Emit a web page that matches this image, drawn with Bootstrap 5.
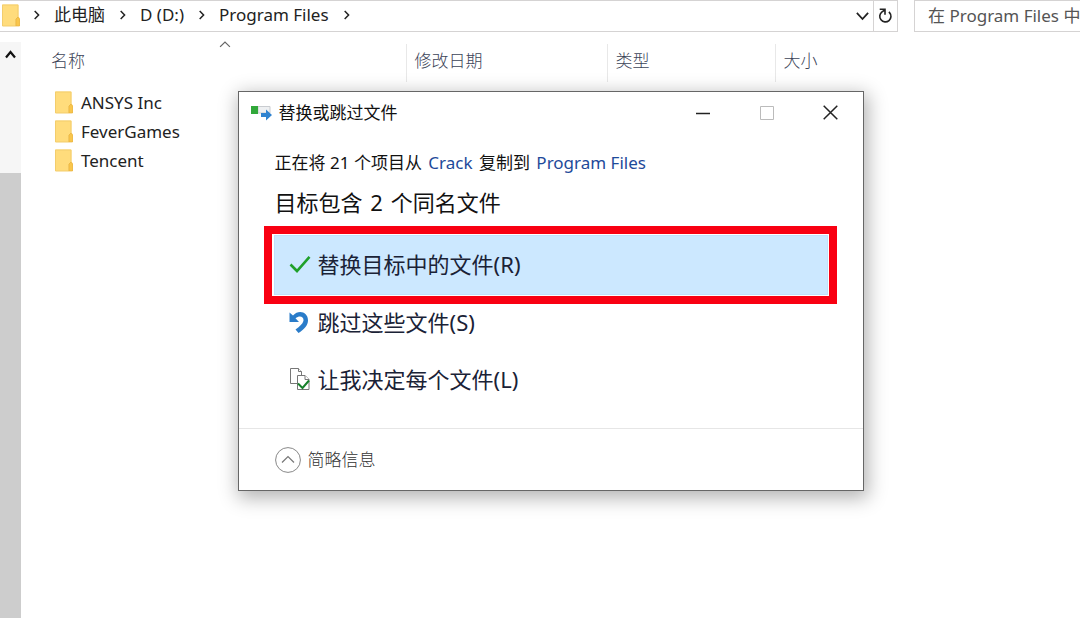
<!DOCTYPE html>
<html lang="zh-CN">
<head>
<meta charset="utf-8">
<meta name="viewport" content="width=device-width, initial-scale=1">
<title>Program Files</title>
<link href="https://cdn.jsdelivr.net/npm/bootstrap@5.3.0/dist/css/bootstrap.min.css" rel="stylesheet">
<style>
  body { font-family: "Noto Sans", "Noto Sans CJK SC", sans-serif; font-size: 17px; line-height: 24px; color: #222; background: #fff; overflow: hidden; }
  button { background: none; border: 0; padding: 0; color: inherit; }
  svg { display: block; flex: none; }
  .stroke { fill: none; stroke: currentColor; stroke-linecap: square; }

  .address { border: 1px solid #d5d3d3; border-left: 0; }
  .topbar { height: 32px; }
  .crumb { color: #222; text-decoration: none; padding-right: 1px; }
  .crumbs { gap: 14px; padding: 0 0 2px 2px; }
  .refresh { width: 24px; border-left: 1px solid #d5d3d3; }
  .search { width: 166px; border: 1px solid #d5d3d3; border-right: 0; color: #555; padding: 0 0 0 13px; outline: 0; }
  .search::placeholder { color: #555; opacity: 1; }

  .scroller { width: 21px; background: #f6f6f6; margin-top: 10px; }
  .scroll-up { height: 24px; }
  .thumb { background: #cdcdcd; margin-top: 107px; }

  .files { table-layout: fixed; }
  .files th { font-weight: 300; color: #3c4458; height: 38px; padding: 0 8px 4px; border-left: 1px solid #e8e8e8; }
  .files th:first-child { border-left: 0; padding-left: 30px; }
  .files td { height: 29px; padding: 0 0 0 34px; }
  .files tbody::before { content: ""; display: block; height: 6px; }
  .col-name { width: 385px; } .col-date { width: 201px; } .col-type { width: 168px; }
  .sort { left: 198px; top: 0; color: #666; }

  .copy-dialog { left: 22%; top: 91px; width: 58%; background: #fff; border: 1px solid #666; box-shadow: 2px 5px 18px 2px rgba(0,0,0,.3); color: #111; }
  .titlebar { height: 41px; padding-left: 12px; }
  .title-text { padding-left: 7px; }
  .winbtn { width: 64px; height: 41px; }
  .intro { padding: 18px 36px 0; }
  .intro a { color: #1e4a9a; text-decoration: none; padding: 0 2px; }
  .heading { font-size: 22px; line-height: 32px; font-weight: 400; margin: 11px 0 0; }
  .count { padding: 0 2px; }
  .marked { border: 8px solid #f90012; margin: 8px 26px 0 25px; padding: 1px 1px 1px 2px; }
  .option { font-size: 22px; line-height: 32px; height: 57px; gap: 7px; padding: 0 0 2px 15px; color: #1a2236; text-align: left; }
  .option.chosen { background: #cce8ff; height: 60px; border: 1px solid #c0e0fa; padding-left: 14px; }
  .others { padding: 0 35px 20px; margin-top: -10px; }
  .foot { border-top: 1px solid #e6e6e6; padding: 15px 36px; }
  .less { gap: 7px; color: #333; font-weight: 300; line-height: 31px; }
</style>
</head>
<body class="vh-100 d-flex flex-column position-relative">

<svg class="d-none" aria-hidden="true">
  <symbol id="folder" viewBox="0 0 18 23">
    <path d="M0 .5h16.500v12l1.500 2V22H0z" fill="#ffe08a"/>
    <path d="M.5 1h15.500v12l-2 2v7H.5z" fill="#ffdc7c" stroke="#f3cd6c"/>
    <path d="M14 22v-7l2-2 1.500 2v7z" fill="#f9c64c" stroke="#e9b23e" stroke-width=".7"/>
  </symbol>
  <symbol id="next" viewBox="0 0 6 10"><path class="stroke" d="M1.200 1.500 4.600 5 1.200 8.500" stroke-width="1.500"/></symbol>
</svg>

<header class="topbar d-flex flex-shrink-0">
  <nav class="address d-flex align-items-center flex-grow-1" aria-label="地址">
    <div class="crumbs d-flex align-items-center flex-grow-1">
      <svg width="18" height="23"><use href="#folder"/></svg>
      <svg width="6" height="10"><use href="#next"/></svg>
      <a class="crumb" href="#">此电脑</a>
      <svg width="6" height="10"><use href="#next"/></svg>
      <a class="crumb" href="#">D (D:)</a>
      <svg width="6" height="10"><use href="#next"/></svg>
      <a class="crumb" href="#">Program Files</a>
      <svg width="6" height="10"><use href="#next"/></svg>
    </div>
    <button class="px-1" aria-label="展开"><svg width="13" height="9" viewBox="0 0 13 9"><path class="stroke" stroke-width="1.800" d="m1.500 1.500 5 5.500 5-5.500"/></svg></button>
    <button class="refresh align-self-stretch d-flex align-items-center justify-content-center" aria-label="刷新"><svg width="15" height="16" viewBox="0 0 15 16"><path class="stroke" stroke-width="1.600" d="M11.500 4.500A5.600 5.600 0 1 1 4 3.800L6.800 2M2.500 1.200H7V6"/></svg></button>
  </nav>
  <input class="search ms-3 rounded-0" type="text" aria-label="搜索" placeholder="在 Program Files 中">
</header>

<main class="d-flex flex-grow-1">
  <div class="scroller d-flex flex-column flex-shrink-0">
    <button class="scroll-up d-flex justify-content-center align-items-center" aria-label="向上"><svg width="11" height="9" viewBox="0 0 11 9"><path d="M1 7.500 5.500 2 10 7.500" fill="none" stroke="#111" stroke-width="2.200"/></svg></button>
    <div class="thumb flex-grow-1"></div>
  </div>
  <div class="flex-grow-1 position-relative pt-2">
    <svg class="sort position-absolute mt-2" width="12" height="8" viewBox="0 0 12 8"><path class="stroke" stroke-width="1.200" d="M1.500 6.500 6 2l4.500 4.500"/></svg>
    <table class="files w-100 mt-1">
      <thead><tr><th class="col-name">名称</th><th class="col-date">修改日期</th><th class="col-type">类型</th><th>大小</th></tr></thead>
      <tbody>
        <tr><td><div class="d-flex align-items-center gap-2"><svg width="18" height="23"><use href="#folder"/></svg><span>ANSYS Inc</span></div></td><td></td><td></td><td></td></tr>
        <tr><td><div class="d-flex align-items-center gap-2"><svg width="18" height="23"><use href="#folder"/></svg><span>FeverGames</span></div></td><td></td><td></td><td></td></tr>
        <tr><td><div class="d-flex align-items-center gap-2"><svg width="18" height="23"><use href="#folder"/></svg><span>Tencent</span></div></td><td></td><td></td><td></td></tr>
      </tbody>
    </table>
  </div>
</main>

<section class="copy-dialog position-absolute" role="dialog" aria-labelledby="dlg-title">
  <div class="titlebar d-flex align-items-center">
    <svg width="21" height="16" viewBox="0 0 21 16"><path d="M7 1.500h12V8H7z" fill="#eef0f2" stroke="#c9ccd0"/><path d="M0 1h7v8H0z" fill="#31a83a"/><path d="M10 8h5V4.500l6 5.500-6 5.500V12h-5z" fill="#2f83d0"/></svg>
    <span id="dlg-title" class="title-text flex-grow-1">替换或跳过文件</span>
    <button class="winbtn d-flex align-items-center justify-content-center" aria-label="最小化"><svg width="14" height="14" viewBox="0 0 14 14"><path d="M0 7.500h14" stroke="#222" stroke-width="1.500"/></svg></button>
    <button class="winbtn d-flex align-items-center justify-content-center" aria-label="最大化" disabled><svg width="14" height="14" viewBox="0 0 14 14"><path d="M.5.5h13v13H.5z" fill="none" stroke="#bbb"/></svg></button>
    <button class="winbtn d-flex align-items-center justify-content-center" aria-label="关闭"><svg width="15" height="15" viewBox="0 0 15 15"><path d="m.7.7 13.600 13.600m0-13.600L.7 14.300" stroke="#222" stroke-width="1.500"/></svg></button>
  </div>
  <div class="intro">
    <div>正在将 21 个项目从 <a href="#">Crack</a> 复制到 <a href="#">Program Files</a></div>
    <h1 class="heading">目标包含 <span class="count">2</span> 个同名文件</h1>
  </div>
  <div class="marked">
    <button class="option chosen d-flex align-items-center w-100">
      <svg width="22" height="18" viewBox="0 0 22 18"><path d="m1.500 9.500 6.500 6.500L20.500 1.800" fill="none" stroke="#1fa02a" stroke-width="2.600"/></svg>替换目标中的文件(R)</button>
  </div>
  <div class="others">
    <button class="option d-flex align-items-center w-100">
      <svg width="22" height="22" viewBox="0 0 22 22"><path d="M.5 1.500v9.500h9.500L6.500 7.300C11 3.800 15.500 6 14.300 10.200 13.600 12.800 11 15 6.500 18.500L9.500 22C15 18.500 19 14.500 19 9.500 19 1 9.800-1.800 4 4.500z" fill="#2a7cc9"/></svg>跳过这些文件(S)</button>
    <button class="option d-flex align-items-center w-100">
      <svg width="22" height="24" viewBox="0 0 22 24"><g fill="#fff" stroke="#777"><path d="M1.500 1.500h8l3 3v12h-11z"/><path d="M9.500 1.500v3h3"/><path d="M8.500 8.500h7.500l4 4v10H8.500z"/><path d="M16 8.500v4h4"/></g><path d="m9 16.500 4.500 4.500 6.500-7.500" fill="none" stroke="#16802a" stroke-width="2"/></svg>让我决定每个文件(L)</button>
  </div>
  <div class="foot">
    <button class="less d-flex align-items-center"><svg width="26" height="26" viewBox="0 0 26 26"><circle cx="13" cy="13" r="12.400" fill="none" stroke="#888"/><path d="m7 15.500 6-6 6 6" fill="none" stroke="#777" stroke-width="1.200"/></svg>简略信息</button>
  </div>
</section>

<script src="https://cdn.jsdelivr.net/npm/bootstrap@5.3.0/dist/js/bootstrap.bundle.min.js"></script>
</body>
</html>
